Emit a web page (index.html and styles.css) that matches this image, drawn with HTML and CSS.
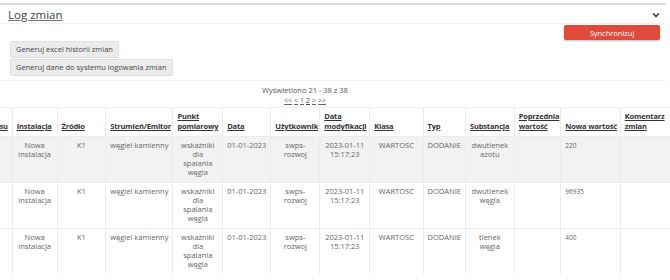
FILE: index.html
```html
<!DOCTYPE html>
<html lang="pl">
<head>
<meta charset="utf-8">
<title>Log zmian</title>
<link rel="stylesheet" href="styles.css">
</head>
<body>
<div class="panel">
  <div class="panel-head">
    <a class="panel-title" href="#">Log zmian</a>
    <svg class="chev" width="8" height="6" viewBox="0 0 8 6"><path d="M1 1.5 L4 4.5 L7 1.5" fill="none" stroke="#333" stroke-width="1.5"/></svg>
  </div>
  <div class="toolbar">
    <div class="gen-buttons">
      <button class="btn">Generuj excel historii zmian</button>
      <button class="btn">Generuj dane do systemu logowania zmian</button>
    </div>
    <button class="btn-red">Synchronizuj</button>
  </div>
  <div class="info">
    <div class="count">Wyświetlono 21 - 38 z 38</div>
    <div class="pager"><a href="#">&lt;&lt;</a> <a href="#">&lt;</a> <a href="#">1</a> <a href="#" class="cur">2</a> <a href="#">&gt;</a> <a href="#">&gt;&gt;</a></div>
  </div>
  <div class="scroll">
    <table class="log">
      <colgroup>
        <col class="c0"><col class="c1"><col class="c2"><col class="c3"><col class="c4"><col class="c5"><col class="c6"><col class="c7"><col class="c8"><col class="c9"><col class="c10"><col class="c11"><col class="c12"><col class="c13">
      </colgroup>
      <thead>
        <tr>
          <th class="first"><a href="#">Kod wpisu</a></th>
          <th><a href="#">Instalacja</a></th>
          <th><a href="#">Źródło</a></th>
          <th><a href="#">Strumień/Emitor</a></th>
          <th><a href="#">Punkt pomiarowy</a></th>
          <th><a href="#">Data</a></th>
          <th><a href="#">Użytkownik</a></th>
          <th><a href="#">Data modyfikacji</a></th>
          <th><a href="#">Klasa</a></th>
          <th><a href="#">Typ</a></th>
          <th><a href="#">Substancja</a></th>
          <th><a href="#">Poprzednia wartość</a></th>
          <th><a href="#">Nowa wartość</a></th>
          <th><a href="#">Komentarz zmian</a></th>
        </tr>
      </thead>
      <tbody>
        <tr class="odd">
          <td></td><td>Nowa instalacja</td><td>K1</td><td class="nw">węgiel kamienny</td><td>wskaźniki dla spalania węgla</td><td class="nw">01-01-2023</td><td>swps-rozwoj</td><td>2023-01-11 15:17:23</td><td>WARTOSC</td><td>DODANIE</td><td>dwutlenek azotu</td><td></td><td class="num">220</td><td></td>
        </tr>
        <tr>
          <td></td><td>Nowa instalacja</td><td>K1</td><td class="nw">węgiel kamienny</td><td>wskaźniki dla spalania węgla</td><td class="nw">01-01-2023</td><td>swps-rozwoj</td><td>2023-01-11 15:17:23</td><td>WARTOSC</td><td>DODANIE</td><td>dwutlenek węgla</td><td></td><td class="num">96935</td><td></td>
        </tr>
        <tr>
          <td></td><td>Nowa instalacja</td><td>K1</td><td class="nw">węgiel kamienny</td><td>wskaźniki dla spalania węgla</td><td class="nw">01-01-2023</td><td>swps-rozwoj</td><td>2023-01-11 15:17:23</td><td>WARTOSC</td><td>DODANIE</td><td>tlenek węgla</td><td></td><td class="num">400</td><td></td>
        </tr>
      </tbody>
    </table>
  </div>
</div>
</body>
</html>
```

FILE: styles.css
```css
html, body {
  margin: 0;
  padding: 0;
  background: #fff;
}
body {
  font-family: "Open Sans", "DejaVu Sans", sans-serif;
  color: #555;
  width: 670px;
  height: 280px;
  overflow: hidden;
}
.panel {
  width: 666px;
  margin-top: 3px;
  border-top: 2px solid #dcdcdc;
}
.panel-head {
  display: flex;
  align-items: center;
  justify-content: space-between;
  height: 18px;
  padding: 0 6px 0 8px;
  border-bottom: 1px solid #f0f0f0;
}
.panel-title {
  font-size: 11.5px;
  color: #444;
  text-decoration: underline;
  text-decoration-color: #777;
}
.chev {
  display: block;
  margin-top: 1px;
}
.toolbar {
  display: flex;
  justify-content: space-between;
  align-items: flex-start;
  padding: 1px 6px 4px 10px;
  border-bottom: 1px solid #f0f0f0;
}
.gen-buttons {
  display: flex;
  flex-direction: column;
  align-items: flex-start;
  gap: 1px;
  padding-top: 16px;
}
.btn {
  font-family: inherit;
  font-size: 7.5px;
  color: #444;
  background: #ececec;
  border: 1px solid #dedede;
  border-radius: 2px;
  height: 17px;
  padding: 0 5px;
  line-height: 15px;
}
.btn-red {
  font-family: inherit;
  font-size: 7.5px;
  color: #fff;
  background: #df4a3a;
  border: none;
  border-radius: 2px;
  width: 96px;
  height: 15px;
  padding: 0;
  box-shadow: 0 1px 2px rgba(0,0,0,0.25);
}
.info {
  width: 610px;
  text-align: center;
  font-size: 7.5px;
  color: #555;
  padding-top: 4px;
  line-height: 10px;
}
.pager a {
  color: #666;
  text-decoration: underline;
  font-size: 7px;
}
.pager a.cur {
  color: #444;
}
.scroll {
  overflow: hidden;
  width: 670px;
  margin-top: 1px;
}
.log {
  border-collapse: collapse;
  table-layout: fixed;
  margin-left: -38px;
  font-size: 7.5px;
}
.c0 { width: 50px; }
.c1 { width: 45px; }
.c2 { width: 50px; }
.c3 { width: 66px; }
.c4 { width: 50px; }
.c5 { width: 46px; }
.c6 { width: 49px; }
.c7 { width: 50px; }
.c8 { width: 54px; }
.c9 { width: 42px; }
.c10 { width: 49px; }
.c11 { width: 46px; }
.c12 { width: 61px; }
.c13 { width: 50px; }
.log th {
  text-align: left;
  vertical-align: bottom;
  padding: 3px 1px 5px 4px;
  line-height: 10px;
  border-left: 1px solid #ececec;
  border-top: 1px solid #f2f2f2;
  height: 18px;
}
.log th a {
  color: #333;
  font-weight: 700;
  text-decoration: underline;
  letter-spacing: -0.15px;
}
.log th.first {
  white-space: nowrap;
  text-align: right;
  padding-right: 4px;
}
.log td {
  text-align: center;
  vertical-align: top;
  padding: 4px 4px;
  line-height: 9px;
  height: 37px;
  color: #666;
  border-left: 1px solid #ececec;
  border-top: 1px solid #ececec;
}
.log td.nw {
  white-space: nowrap;
}
.log tbody tr.odd td {
  background: #f2f2f2;
}
.log td.num {
  text-align: left;
  padding-left: 4px;
  font-size: 6.5px;
}
```
